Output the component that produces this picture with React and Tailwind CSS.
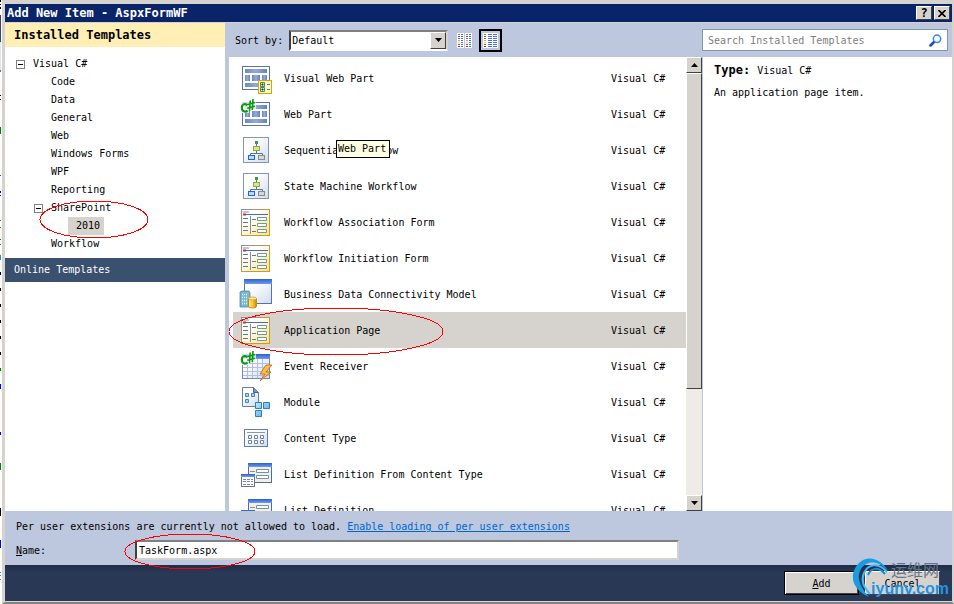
import { useState } from 'react';

const categories = ['Code', 'Data', 'General', 'Web', 'Windows Forms', 'WPF', 'Reporting'];

const templates = [
  { name: 'Visual Web Part', icon: 'visualWebPart' },
  { name: 'Web Part', icon: 'webPart' },
  { name: 'Sequential Workflow', icon: 'workflow' },
  { name: 'State Machine Workflow', icon: 'workflow' },
  { name: 'Workflow Association Form', icon: 'form' },
  { name: 'Workflow Initiation Form', icon: 'form' },
  { name: 'Business Data Connectivity Model', icon: 'business' },
  { name: 'Application Page', icon: 'form' },
  { name: 'Event Receiver', icon: 'event' },
  { name: 'Module', icon: 'module' },
  { name: 'Content Type', icon: 'contentType' },
  { name: 'List Definition From Content Type', icon: 'list' },
  { name: 'List Definition', icon: 'list' },
];

// [top, height, color] of the editor text peeking out behind the dialog
const editorMarks = [
  [0, 2, '#000'], [4, 1, '#000'], [7, 2, '#000'], [15, 27, '#3b4667'], [42, 28, '#dfe3f0'], [70, 2, '#5a7396'],
  [95, 1, '#000'], [99, 1, '#000'], [127, 7, '#008000'], [175, 1, '#008000'], [191, 2, '#00f'], [195, 1, '#00f'],
  [220, 1, '#008000'], [227, 1, '#008000'], [239, 1, '#008000'], [244, 1, '#008000'], [255, 5, '#2b91af'],
  [272, 3, '#000'], [288, 3, '#000'], [304, 3, '#000'], [320, 3, '#000'], [336, 3, '#000'], [352, 3, '#000'],
  [368, 3, '#008000'], [384, 5, '#00f'], [432, 3, '#00f'], [463, 7, '#008000'], [508, 8, '#000'],
  [540, 8, '#00f'], [572, 1, '#2b91af'], [575, 1, '#2b91af'], [579, 1, '#2b91af'],
];

const Gradients = () => (
  <svg width="0" height="0" className="absolute" aria-hidden="true">
    <defs>
      <linearGradient id="blueBar" x1="0" y1="0" x2="1" y2="0">
        <stop offset="0" stopColor="#6d8ac0" />
        <stop offset="0.5" stopColor="#94a9d8" />
        <stop offset="1" stopColor="#6680bd" />
      </linearGradient>
      <linearGradient id="paleBlue" x1="0" y1="0" x2="1" y2="1">
        <stop offset="0.3" stopColor="#fff" />
        <stop offset="1" stopColor="#cfdaf0" />
      </linearGradient>
      <linearGradient id="titleBlue" x1="0" y1="0" x2="0" y2="1">
        <stop offset="0" stopColor="#2f5fc8" />
        <stop offset="1" stopColor="#6c9cf5" />
      </linearGradient>
      <linearGradient id="yellowPage" x1="0" y1="0" x2="1" y2="1">
        <stop offset="0.3" stopColor="#fff" />
        <stop offset="1" stopColor="#ffe27a" />
      </linearGradient>
      <linearGradient id="yellowEdge" x1="0" y1="0" x2="1" y2="1">
        <stop offset="0" stopColor="#8790a0" />
        <stop offset="0.5" stopColor="#b99b4c" />
        <stop offset="1" stopColor="#d99a17" />
      </linearGradient>
      <linearGradient id="gold" x1="0" y1="0" x2="1" y2="0">
        <stop offset="0" stopColor="#ffe58a" />
        <stop offset="0.5" stopColor="#fcc92f" />
        <stop offset="1" stopColor="#c78710" />
      </linearGradient>
      <linearGradient id="cube" x1="0" y1="0" x2="1" y2="1">
        <stop offset="0" stopColor="#b9ecff" />
        <stop offset="1" stopColor="#4b9fe8" />
      </linearGradient>
    </defs>
  </svg>
);

const SharpMark = () => (
  <>
    <path d="M0 3h6V-1h10v12H9v3H0z" fill="#fff" opacity="0.75" />
    <g fill="none" stroke="#0a9a0f">
      <path d="M7.500 6.200C4.500 3.800 1.600 5.500 1.800 9S5 13.500 7.600 11.600" strokeWidth="2.200" />
      <path d="M10.200 1.500 9.500 12M13 0 12.300 11M7.500 5.500 15.200 3.500M7.300 9.200 15 7.200" strokeWidth="1.600" />
    </g>
  </>
);

const WebPartShape = () => (
  <g transform="translate(0 3)">
    <rect x="2.500" y="0.500" width="27" height="23" fill="#fff" stroke="#5673aa" />
    <rect x="5" y="3" width="22" height="4" fill="url(#blueBar)" />
    <rect x="5" y="9" width="5" height="6" fill="url(#blueBar)" />
    <rect x="12" y="9" width="8" height="6" fill="url(#blueBar)" />
    <rect x="22" y="9" width="5" height="6" fill="url(#blueBar)" />
    <rect x="5" y="17" width="22" height="4" fill="url(#blueBar)" />
  </g>
);

const icons = {
  visualWebPart: (
    <>
      <WebPartShape />
      <rect x="18.500" y="17.500" width="13" height="13" fill="#fffac2" stroke="#e2a100" />
      <path d="M20.500 19.500h4v4h-4zM20.500 24.500h4v4h-4z" fill="#d8f0cf" stroke="#4f8b45" />
      <path d="M22 21h1v1h-1zM22 26h1v1h-1z" fill="#12306a" stroke="#12306a" />
      <path d="M27 21.500h3M27 26.500h3" stroke="#4a78d0" />
    </>
  ),
  webPart: (
    <>
      <WebPartShape />
      <SharpMark />
    </>
  ),
  workflow: (
    <g transform="translate(0 1)">
      <rect x="3.500" y="1.500" width="25" height="25" fill="url(#paleBlue)" stroke="#8295b5" />
      <path d="M16.500 8v3M16.500 15v3M10.500 19v-1.500h12V19" fill="none" stroke="#5b7390" />
      <rect x="15" y="5" width="3" height="3" fill="#3c9c3d" />
      <rect x="13.500" y="10.500" width="6" height="4" fill="#d9e78c" stroke="#94a83e" />
      <rect x="8.500" y="19.500" width="6" height="4" fill="#b7dcff" stroke="#2864d4" />
      <rect x="18.500" y="19.500" width="6" height="4" fill="#d7d7d7" stroke="#8b8b8b" />
    </g>
  ),
  form: (
    <>
      <rect x="1.500" y="2.500" width="28" height="26" fill="url(#yellowPage)" stroke="url(#yellowEdge)" />
      <path d="M3 4.500l1 1 1-1 1 1 1-1 1 1 1-1" fill="none" stroke="#555b68" strokeWidth="0.800" />
      <path d="M6 7.500h22" stroke="#4569c4" />
      <path d="M3 7.500h3" stroke="#e22a1c" strokeWidth="2" />
      <path d="M10.500 9v18" stroke="#7d8fac" />
      <path d="M3 11.500h5M3 15.500h5M3 19.500h5M3 23.500h5M12 12.500h4M12 18.500h4M12 24.500h4" stroke="#63779b" />
      <path d="M17.500 10.500h9v3h-9zM17.500 16.500h9v3h-9zM17.500 22.500h9v3h-9z" fill="#fff" stroke="#6d9a9a" />
    </>
  ),
  business: (
    <>
      <rect x="4.500" y="0.500" width="27" height="24" fill="url(#paleBlue)" stroke="#5671ad" />
      <rect x="4" y="0" width="28" height="5" fill="url(#titleBlue)" />
      <path d="M0 13l2-1h7l1 2v14H0z" fill="#7ab8d2" stroke="#457d9b" strokeWidth="0.700" />
      <path d="M2 15.500h6M2 18.500h6M2 21.500h6M2 24.500h6" stroke="#e9faff" strokeDasharray="1 1" strokeWidth="1.500" />
      <path d="M8.500 19.500v8c1 2 7 2 8 0v-8z" fill="url(#gold)" stroke="#c58a1c" />
      <ellipse cx="12.500" cy="19.500" rx="4" ry="1.500" fill="#ffe9a0" stroke="#d49c2a" strokeWidth="0.800" />
    </>
  ),
  event: (
    <>
      <g transform="translate(0 1)">
        <rect x="2.500" y="2.500" width="27" height="24" fill="url(#paleBlue)" stroke="#7088b8" />
        <rect x="3" y="2" width="27" height="5" fill="url(#titleBlue)" />
        <path d="M7.500 7v19M12.500 7v19M17.500 7v19M22.500 7v19M3 11.500h26M3 15.500h26M3 19.500h26M3 23.500h26" stroke="#b3c1de" />
        <path d="M26 13l-6 9h5l-5 7 11-9h-5l6-7z" fill="#ffbd3c" stroke="#b8641a" strokeWidth="0.800" />
      </g>
      <SharpMark />
    </>
  ),
  module: (
    <>
      <path d="M2.500 0.500h11l5 5v14h-16z" fill="url(#paleBlue)" stroke="#637da9" />
      <path d="M13.500 0.500v5h5" fill="#8094b7" stroke="#4e6387" />
      <path d="M5.500 6.500h3v3h-3zM11.500 6.500h3v3h-3zM5.500 12.500h3v3h-3z" fill="#a9d6fa" stroke="#3d86cd" />
      <path d="M15.500 15.500h6v6h-6zM23.500 15.500h6v6h-6zM15.500 23.500h6v6h-6z" fill="url(#cube)" stroke="#3679bd" />
    </>
  ),
  contentType: (
    <>
      <rect x="4.500" y="6.500" width="23" height="17" fill="url(#paleBlue)" stroke="#637da9" />
      <path d="M7 9.500h18" stroke="#8597b7" />
      <path d="M8.500 12.500h3v3h-3zM14.500 12.500h3v3h-3zM20.500 12.500h3v3h-3zM8.500 17.500h3v3h-3zM14.500 17.500h3v3h-3zM20.500 17.500h3v3h-3z" fill="#fff" stroke="#7182a1" />
    </>
  ),
  list: (
    <>
      <rect x="8.500" y="4.500" width="23" height="19" fill="#f3f1dc" stroke="#4f6aa7" />
      <rect x="8" y="4" width="24" height="4" fill="url(#titleBlue)" />
      <path d="M10 12.500h5M10 18.500h5" stroke="#8190a9" />
      <path d="M16.500 10.500h12v3h-12zM16.500 16.500h12v3h-12z" fill="#fff" stroke="#7191b5" />
      <rect x="1.500" y="15.500" width="13" height="12" fill="#fff" stroke="#5e78ad" />
      <rect x="1" y="15" width="14" height="3" fill="url(#titleBlue)" />
      <path d="M3 20.500h10M3 22.500h10M3 25.500h10" stroke="#7a8dac" strokeDasharray="3 1" />
    </>
  ),
};

const TemplateIcon = ({ name }) => (
  <svg width="32" height="32" viewBox="0 -1 32 32" className="shrink-0 overflow-visible" aria-hidden="true">
    {icons[name]}
  </svg>
);

const ViewIcon = ({ wide }) => {
  const colors = ['#3fa05d', '#e8281c', '#4a63ef', '#8cc63f', '#f0d020', '#e8281c', '#4646d4'];
  return (
    <svg width="15" height="15" viewBox="0 0 15 15" shapeRendering="crispEdges" aria-hidden="true">
      <rect width={wide ? 5 : 7} height="15" fill="#fff" />
      <rect x={wide ? 5 : 8} width={wide ? 10 : 7} height="15" fill="#fff" />
      {colors.map((color, i) => (
        <g key={i}>
          <rect x="1" y={1 + i * 2} width="2" height="1" fill={color} />
          {wide ? (
            <>
              <rect x="5" y={1 + i * 2} width="4" height="1" fill="#4a6fdc" />
              <rect x="10" y={1 + i * 2} width="4" height="1" fill="#4a6fdc" />
            </>
          ) : (
            <>
              <rect x="4" y={1 + i * 2} width="2" height="1" fill="#4a6fdc" />
              <rect x="9" y={1 + i * 2} width="2" height="1" fill={color} />
              <rect x="12" y={1 + i * 2} width="2" height="1" fill="#4a6fdc" />
            </>
          )}
        </g>
      ))}
    </svg>
  );
};

const Toggle = () => (
  <button type="button" aria-label="Collapse" className="flex size-[9px] shrink-0 items-center justify-center border border-[#808080] bg-white">
    <span className="h-px w-[5px] bg-black" />
  </button>
);

const raised = 'border border-t-white border-l-white border-r-[#404040] border-b-[#404040] bg-[#d6d3ce]';

const Arrow = ({ up }) => (
  <svg width="7" height="4" viewBox="0 0 7 4" aria-hidden="true">
    <path d={up ? 'M0 4 3.500 0 7 4z' : 'M0 0h7L3.500 4z'} />
  </svg>
);

const Ring = ({ className }) => (
  <svg className={`pointer-events-none absolute z-10 overflow-visible ${className}`} aria-hidden="true">
    <ellipse cx="50%" cy="50%" rx="50%" ry="50%" fill="none" stroke="#f00" shapeRendering="crispEdges" />
  </svg>
);

const TitleBar = () => (
  <header className="flex h-[19px] shrink-0 items-center border-b border-[#d6d3ce] bg-[#0a246a] px-[2px]">
    <h1 className="flex-1 text-[12px] font-bold text-white">Add New Item - AspxFormWF</h1>
    <div className="flex gap-[2px]">
      <button type="button" aria-label="Help" className={`flex h-[14px] w-4 items-center justify-center text-[12px] font-bold ${raised}`}>?</button>
      <button type="button" aria-label="Close" className={`flex h-[14px] w-4 items-center justify-center ${raised}`}>
        <svg width="8" height="7" viewBox="0 0 8 7" aria-hidden="true">
          <path d="M0.500 0 7.500 7M7.500 0 0.500 7" stroke="#000" strokeWidth="1.600" />
        </svg>
      </button>
    </div>
  </header>
);

const Sidebar = () => (
  <aside className="flex w-[220px] shrink-0 flex-col bg-white">
    <h2 className="h-6 bg-[#ffefb5] pl-[9px] text-[12px] leading-6 font-bold">Installed Templates</h2>
    <ul className="pt-2 pb-[5px] leading-[18px]">
      <li>
        <div className="flex items-center gap-2 pl-[11px]"><Toggle />Visual C#</div>
        <ul>
          {categories.map((category) => (
            <li key={category} className="pl-[46px]">{category}</li>
          ))}
          <li className="relative">
            <div className="flex items-center gap-2 pl-[29px]"><Toggle />SharePoint</div>
            <div className="ml-[63px] w-9 bg-[#d6d3ce] pl-2">2010</div>
            <Ring className="top-0.5 left-[35px] h-[37px] w-[108px]" />
          </li>
          <li className="pl-[46px]">Workflow</li>
        </ul>
      </li>
    </ul>
    <h2 className="h-6 bg-[#39516f] pl-[9px] leading-6 text-white">Online Templates</h2>
  </aside>
);

const Toolbar = () => (
  <div className="flex h-[34px] shrink-0 items-center pl-[6px]">
    <label htmlFor="sort">Sort by:</label>
    <div className="relative ml-[6px]">
      <select
        id="sort"
        className="h-[21px] w-[159px] appearance-none border-2 border-t-[#808080] border-l-[#404040] border-r-[#d6d3ce] border-b-white bg-white pl-px text-[10px]"
      >
        <option>Default</option>
      </select>
      <span className={`pointer-events-none absolute top-[2px] right-[2px] flex h-[17px] w-4 items-center justify-center ${raised}`}>
        <Arrow />
      </span>
    </div>
    <button type="button" aria-label="Small icons" className="ml-[9px]"><ViewIcon /></button>
    <button type="button" aria-label="Medium icons" className="ml-[7px] flex size-[23px] items-center justify-center border-2 border-black">
      <ViewIcon wide />
    </button>
  </div>
);

const Scrollbar = () => (
  <div className="flex w-4 shrink-0 flex-col bg-[#efebe7]">
    <button type="button" aria-label="Scroll up" className={`flex h-4 items-center justify-center ${raised}`}><Arrow up /></button>
    <div className={`h-[316px] ${raised}`} />
    <button type="button" aria-label="Scroll down" className={`mt-auto flex h-4 items-center justify-center ${raised}`}><Arrow /></button>
  </div>
);

const TemplateList = ({ selected, onSelect }) => (
  <div className="flex min-h-0 flex-1 bg-white">
    <ul className="min-w-0 flex-1 overflow-hidden pt-[3px] pl-1">
      {templates.map(({ name, icon }) => (
        <li key={name} className="relative">
          <button
            type="button"
            onClick={() => onSelect(name)}
            className={`flex h-9 w-full items-center pl-[7px] text-left ${name === selected ? 'bg-[#d6d3ce]' : ''}`}
          >
            <TemplateIcon name={icon} />
            <span className="ml-3 flex-1">{name}</span>
            <span className="w-[75px]">Visual C#</span>
          </button>
          {name === 'Sequential Workflow' && (
            <span role="tooltip" className="absolute top-2 left-[103px] h-[18px] w-[54px] border border-black bg-[#ffffe1] pl-px leading-4">Web Part</span>
          )}
          {name === 'Application Page' && <Ring className="-top-1 -left-1 h-[47px] w-[214px]" />}
        </li>
      ))}
    </ul>
    <Scrollbar />
  </div>
);

const Details = () => (
  <aside className="flex w-[250px] shrink-0 flex-col">
    <div className="h-[34px] pt-[6px] pr-1">
      <div className="flex h-[22px] items-center border border-[#8496ad] bg-white px-[5px]">
        <input
          type="search"
          aria-label="Search Installed Templates"
          placeholder="Search Installed Templates"
          className="min-w-0 flex-1 text-[10px] outline-none placeholder:text-[#808080]"
        />
        <svg width="13" height="13" viewBox="0 0 13 13" fill="none" aria-hidden="true">
          <path d="M1.500 11.500 5.500 7.500" stroke="#1c4fa5" strokeWidth="2.500" strokeLinecap="round" />
          <circle cx="8" cy="4.800" r="3.700" fill="#f0f8ff" stroke="#3f86da" strokeWidth="1.500" />
        </svg>
      </div>
    </div>
    <div className="ml-px flex-1 bg-white px-[11px] pt-[5px] leading-4">
      <p><strong className="text-[12px]">Type:</strong><span className="ml-[7px]">Visual C#</span></p>
      <p className="mt-[6px]">An application page item.</p>
    </div>
  </aside>
);

const Watermark = () => (
  <div className="pointer-events-none absolute right-[5px] bottom-[5px] z-20 h-[42px] w-[98px]">
    <svg width="40" height="42" viewBox="0 0 40 42" fill="none" className="absolute top-0 left-0" aria-hidden="true">
      <path d="M37 14C31 2 17-3 8 6S-2 31 18 40C9 30 5 20 10 12S26 2 37 14z" fill="#199ce2" />
      <path d="M36 15C27 5 17 7 13 16S14 32 19 37" stroke="#47b7ee" strokeWidth="2" />
      <path d="M34 17C27 9 20 11 17 18" stroke="#168cd5" strokeWidth="2" />
    </svg>
    <span className="absolute top-0 left-10 font-[Noto_Sans_CJK_SC,sans-serif] text-[16px] leading-6 text-[#697386]">运维网</span>
    <span className="absolute right-0 bottom-0 font-[Liberation_Sans,sans-serif] text-[16px] leading-5 font-bold text-[#2492e4]">iyunv.com</span>
  </div>
);

export default function App() {
  const [selected, setSelected] = useState('Application Page');
  const [fileName, setFileName] = useState('TaskForm.aspx');

  return (
    <div className="relative flex h-screen overflow-hidden bg-white font-[DejaVu_Sans_Mono,Liberation_Mono,monospace] text-[10px] text-black">
      <Gradients />
      <svg className="h-full w-px shrink-0" aria-hidden="true">
        {editorMarks.map(([top, height, color]) => (
          <rect key={top} y={top} width="1" height={height} fill={color} />
        ))}
      </svg>
      <div className="ml-px flex min-w-0 flex-1 flex-col border-t-4 border-r-2 border-b-2 border-l-[3px] border-[#d6d3ce] border-b-[#848284]">
        <TitleBar />
        <main className="flex min-h-0 flex-1 bg-[#bdc7de]">
          <Sidebar />
          <div className="ml-1 flex min-w-0 flex-1 flex-col">
            <Toolbar />
            <TemplateList selected={selected} onSelect={setSelected} />
          </div>
          <Details />
        </main>
        <section className="h-[54px] shrink-0 bg-[#bdc7de] pt-2 pr-[273px] pl-[11px]">
          <p className="leading-4">
            Per user extensions are currently not allowed to load.{' '}
            <a href="#" className="text-[#0066cc] underline">Enable loading of per user extensions</a>
          </p>
          <div className="relative mt-[5px] flex items-center">
            <label htmlFor="fileName" className="w-[119px]"><u>N</u>ame:</label>
            <input
              id="fileName"
              value={fileName}
              onChange={(e) => setFileName(e.target.value)}
              className="h-5 min-w-0 flex-1 border-2 border-t-[#808080] border-l-[#404040] border-r-[#d6d3ce] border-b-[#d6d3ce] bg-white pl-0.5 outline-none"
            />
            <Ring className="-top-[6px] left-[109px] h-[35px] w-[130px]" />
          </div>
        </section>
        <footer className="flex h-9 shrink-0 items-center justify-end gap-[6px] bg-linear-to-b from-[#1f2c47] to-[#293955] to-20% pr-3">
          <button type="submit" className="h-6 w-[75px] border border-black bg-[#d6d3ce] shadow-[inset_1px_1px_#fff,inset_-1px_-1px_#404040]"><u>A</u>dd</button>
          <button type="button" className={`h-6 w-[75px] ${raised}`}>Cancel</button>
        </footer>
        <div className="h-px shrink-0 bg-[#d6d3ce]" />
      </div>
      <Watermark />
    </div>
  );
}
